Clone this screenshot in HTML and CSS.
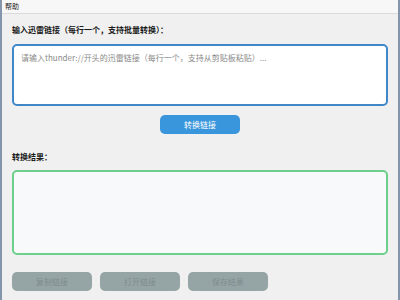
FILE: index.html
```html
<!DOCTYPE html>
<html lang="zh-CN">

<head>
    <meta charset="UTF-8">
    <meta name="viewport" content="width=device-width, initial-scale=1.0">
    <title>迅雷链接转换</title>
    <link rel="stylesheet" href="styles.css">
</head>

<body>

    <div class="window">
        <div class="menubar">
            <span class="menu-item">帮助</span>
        </div>

        <div class="content">
            <div class="label">输入迅雷链接（每行一个，支持批量转换）：</div>
            <textarea class="input-box" placeholder="请输入thunder://开头的迅雷链接（每行一个，支持从剪贴板粘贴）..."></textarea>

            <div class="center-row">
                <button class="btn btn-primary">转换链接</button>
            </div>

            <div class="label label-result">转换结果：</div>
            <textarea class="result-box" readonly></textarea>

            <div class="actions">
                <button class="btn btn-disabled" disabled>复制链接</button>
                <button class="btn btn-disabled" disabled>打开链接</button>
                <button class="btn btn-disabled" disabled>保存结果</button>
            </div>
        </div>
    </div>

</body>

</html>
```

FILE: styles.css
```css
body {
    margin: 0;
    font-family: "Noto Sans CJK SC", "Noto Sans", sans-serif;
    background-color: #f0f0f0;
    overflow: hidden;
}

.window {
    height: 300px;
    box-sizing: border-box;
    border-left: 2px solid #8496ab;
    border-right: 2px solid #8496ab;
    background: #f0f0f0;
}

.menubar {
    height: 13px;
    background: #f7f7f7;
    border-bottom: 1px solid #dadada;
    padding-left: 3px;
    font-size: 7px;
    line-height: 13px;
    color: #222;
}

.content {
    padding: 0 10px;
}

.label {
    margin-top: 10px;
    height: 12px;
    line-height: 12px;
    font-size: 8px;
    font-weight: bold;
    color: #1a1a1a;
}

.label-result {
    margin-top: 17px;
}

textarea {
    display: block;
    width: 100%;
    box-sizing: border-box;
    resize: none;
    outline: none;
    border-radius: 5px;
    font-family: "Noto Sans CJK SC", "Noto Sans", sans-serif;
    font-size: 8px;
    padding: 6px 7px;
}

.input-box {
    margin-top: 8px;
    height: 62px;
    border: 2px solid #3f87c8;
    background: #ffffff;
}

.input-box::placeholder {
    color: #8a8a8a;
}

.result-box {
    margin-top: 7px;
    height: 85px;
    border: 2px solid #6ccf8c;
    background: #f8f9fb;
}

.center-row {
    display: flex;
    justify-content: center;
    margin-top: 9px;
}

.btn {
    width: 80px;
    height: 19px;
    border: none;
    border-radius: 5px;
    font-family: "Noto Sans CJK SC", "Noto Sans", sans-serif;
    font-size: 8px;
    padding: 0;
}

.btn-primary {
    background: #3a96dc;
    color: #ffffff;
}

.btn-disabled {
    background: #95a5a6;
    color: #7f8c8d;
}

.actions {
    display: flex;
    gap: 8px;
    margin-top: 17px;
}
```
